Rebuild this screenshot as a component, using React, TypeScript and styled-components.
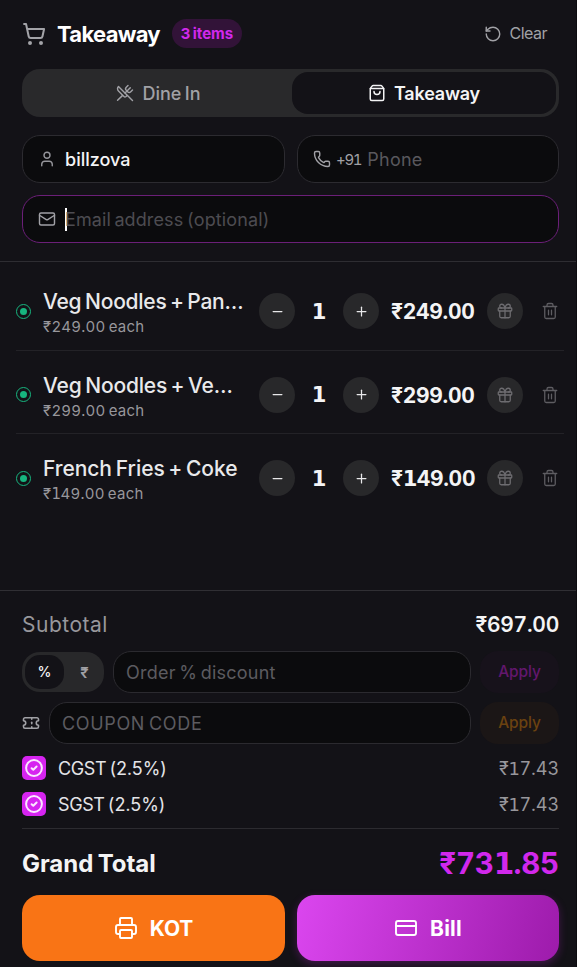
import React from 'react';
import styled, { createGlobalStyle } from 'styled-components';
import {
  ShoppingCart, RotateCcw, UtensilsCrossed, ShoppingBag, User, Phone, Mail, Minus, Plus,
  Gift, Ticket, Printer, CreditCard,
} from 'lucide-react';

const Global = createGlobalStyle`
  *, *::before, *::after { box-sizing: border-box; }
  body { margin: 0; background: #131217; }
`;

const Panel = styled.main`
  width: 577px;
  height: 967px;
  overflow: hidden;
  display: flex;
  flex-direction: column;
  background: #131217;
  border-right: 1px solid #0c0b0f;
  color: #f4f4f5;
  font-family: Inter, 'DejaVu Sans', sans-serif;
  font-variant-numeric: tabular-nums;
`;

const Text = styled.span<{ $size: number; $weight?: number; $color?: string; $ls?: number; $ws?: number }>`
  padding-top: 1px;
  font-size: ${p => p.$size}px;
  font-weight: ${p => p.$weight ?? 400};
  color: ${p => p.$color ?? '#f4f4f5'};
  letter-spacing: ${p => p.$ls ?? 0}px;
  word-spacing: ${p => p.$ws ?? -0.08}em;
  line-height: 1.2;
  white-space: nowrap;
`;

const FootedOne = styled.span`
  font-family: 'DejaVu Sans', sans-serif;
  letter-spacing: -0.03em;
  line-height: 1;
`;

/* Figures with a footed numeral one. */
const Figures = ({ value }: { value: string }) => (
  <>{value.split('').map((c, i) => (c === '1' ? <FootedOne key={i}>1</FootedOne> : c))}</>
);

const Header = styled.header`
  height: 262px;
  flex: none;
  padding: 0 17px 0 22px;
  border-bottom: 1px solid #2e2d32;
`;

const TitleRow = styled.div`
  height: 69px;
  padding: 0 12px 2px 0;
  display: flex;
  align-items: center;
`;

const Title = styled.h1`
  margin: 0 12px 0 11px;
  display: flex;
`;

const Badge = styled.div`
  width: 70px;
  height: 29px;
  border-radius: 15px;
  background: #321338;
  display: flex;
  align-items: center;
  justify-content: center;
`;

const ClearButton = styled.button`
  margin-left: auto;
  padding: 0;
  border: 0;
  background: none;
  font: inherit;
  display: flex;
  align-items: center;
  gap: 7px;
`;

const Tabs = styled.div`
  height: 48px;
  padding: 3px;
  border-radius: 18px;
  background: #29292b;
  display: grid;
  grid-template-columns: 267px 264px;
`;

const Tab = styled.button<{ $active?: boolean }>`
  padding: 0;
  border: 0;
  border-radius: 16px;
  background: ${p => (p.$active ? '#131217' : 'transparent')};
  font: inherit;
  display: flex;
  align-items: center;
  justify-content: center;
  gap: 8px;
`;

const Fields = styled.div`
  margin-top: 18px;
  display: grid;
  grid-template-columns: 263px 262px;
  gap: 12px;
`;

const Field = styled.label<{ $wide?: boolean }>`
  grid-column: ${p => (p.$wide ? '1 / -1' : 'auto')};
  height: 48px;
  padding-left: 15px;
  border: 1px solid ${p => (p.$wide ? '#6b1f78' : '#2c2b30')};
  border-radius: 18px;
  background: #0b0b0d;
  display: flex;
  align-items: center;
`;

const IconSlot = styled.span<{ $gap: number }>`
  display: flex;
  width: 18px;
  justify-content: center;
  margin-right: ${p => p.$gap}px;
`;

const Prefix = styled.span`
  display: flex;
  margin-right: 6px;
`;

const Caret = styled.span`
  width: 2px;
  height: 23px;
  margin-right: -2px;
  background: #fff;
`;

const List = styled.ul`
  flex: 1;
  margin: 0;
  padding: 5px 12px 0 16px;
  list-style: none;
`;

const Item = styled.li`
  height: 83.5px;
  padding-top: 6px;
  display: grid;
  grid-template-columns: 15px 204px 36px 24px 36px 84px 36px 1fr;
  column-gap: 12px;
  align-items: center;
  border-bottom: 1px solid #232227;
  &:last-child { border-bottom-color: transparent; }
`;

const VegMark = styled.span`
  width: 15px;
  height: 15px;
  border: 1.3px solid #17b57f;
  border-radius: 50%;
  display: grid;
  place-items: center;
  &::after {
    content: '';
    width: 7px;
    height: 7px;
    border-radius: 50%;
    background: #17b57f;
  }
`;

const Name = styled.div`
  display: flex;
  flex-direction: column;
  gap: 3px;
  padding-top: 2px;
`;

const RoundButton = styled.button`
  width: 36px;
  height: 36px;
  padding: 0;
  border: 0;
  border-radius: 50%;
  background: #28282a;
  color: #e8e8ea;
  display: grid;
  place-items: center;
`;

const GiftButton = styled(RoundButton)`
  color: #6d6c70;
`;

const Quantity = styled.span`
  justify-self: center;
  padding-top: 1px;
  font: 700 21px 'DejaVu Sans', sans-serif;
`;

const TrashButton = styled.button`
  margin-right: 5px;
  padding: 0;
  border: 0;
  background: none;
  color: #5e5d62;
  display: flex;
  justify-self: end;
`;

const Footer = styled.footer`
  height: 377px;
  flex: none;
  padding: 0 17px 0 22px;
  border-top: 1px solid #302f34;
`;

const Line = styled.div<{ $h: number; $top?: number; $drop?: number }>`
  height: ${p => p.$h}px;
  margin-top: ${p => p.$top ?? 0}px;
  padding-top: ${p => p.$drop ?? 0}px;
  display: flex;
  align-items: center;
  justify-content: space-between;
`;

const EntryRow = styled.div<{ $lead: number }>`
  height: 42px;
  margin-bottom: 9px;
  display: grid;
  grid-template-columns: ${p => p.$lead}px 1fr 79px;
  column-gap: 9px;
  align-items: center;
`;

const Toggle = styled.div`
  height: 40px;
  padding: 3px;
  border-radius: 18px;
  background: #28282a;
  display: grid;
  grid-template-columns: 39px 41px;
`;

const ToggleOption = styled.span<{ $active?: boolean }>`
  border-radius: 15px;
  background: ${p => (p.$active ? '#131217' : 'transparent')};
  display: grid;
  place-items: center;
`;

const Entry = styled.div`
  height: 42px;
  padding-left: 12px;
  border: 1px solid #2b2a2f;
  border-radius: 18px;
  background: #0b0b0d;
  display: flex;
  align-items: center;
`;

const Apply = styled.button<{ $amber?: boolean }>`
  height: 42px;
  padding: 0;
  border: 0;
  border-radius: 18px;
  background: ${p => (p.$amber ? '#1b1616' : '#17121b')};
  font: inherit;
  display: grid;
  place-items: center;
`;

const Tax = styled.div`
  display: flex;
  align-items: center;
  gap: 12px;
`;

const CheckBox = styled.span`
  width: 24px;
  height: 24px;
  border-radius: 5px;
  background: #d624f0;
  color: #fbe6ff;
  display: grid;
  place-items: center;
`;

const Rule = styled.hr`
  height: 1px;
  margin: 12px 0 0;
  border: 0;
  background: #2c2b30;
`;

const Actions = styled.div`
  display: grid;
  grid-template-columns: 263px 262px;
  gap: 12px;
`;

const Action = styled.button<{ $primary?: boolean }>`
  height: 66px;
  padding: 0;
  border: 0;
  border-radius: 18px;
  background: ${p => (p.$primary ? 'linear-gradient(105deg, #db46ef 0%, #9d1bab 100%)' : '#f97415')};
  box-shadow: ${p => (p.$primary ? '0 3px 8px rgba(192, 38, 211, 0.28)' : 'none')};
  color: #fff;
  font: inherit;
  display: flex;
  align-items: center;
  justify-content: center;
  gap: 12px;
`;

const TrashIcon = () => (
  <svg width="18" height="18" viewBox="0 0 24 24" fill="none" stroke="currentColor" strokeWidth="1.7" strokeLinecap="round" strokeLinejoin="round">
    <path d="M3 6h18M5 6v14a2 2 0 0 0 2 2h10a2 2 0 0 0 2-2V6M8 6V4a2 2 0 0 1 2-2h4a2 2 0 0 1 2 2v2M10 11v6M14 11v6" />
  </svg>
);

const CheckIcon = () => (
  <svg width="20" height="20" viewBox="0 0 20 20" fill="none" stroke="currentColor" strokeWidth="2" strokeLinecap="round" strokeLinejoin="round">
    <circle cx="10" cy="10" r="7.9" />
    <path d="M7.6 10.2l1.7 1.6 3.3-3.3" />
  </svg>
);

const items = [
  { name: 'Veg Noodles + Pan…', price: '₹249.00', ls: -0.25 },
  { name: 'Veg Noodles + Ve…', price: '₹299.00', ls: -0.2 },
  { name: 'French Fries + Coke', price: '₹149.00', ls: -0.06 },
];

export default function App() {
  return (
    <Panel>
      <Global />
      <Header>
        <TitleRow>
          <ShoppingCart size={24} strokeWidth={2} color="#a3a3a8" />
          <Title><Text $size={22} $weight={650} $color="#fff" $ls={-0.7}>Takeaway</Text></Title>
          <Badge><Text $size={15} $weight={650} $color="#d128ec" $ls={-0.05} $ws={-0.1}>3 items</Text></Badge>
          <ClearButton>
            <RotateCcw size={18} strokeWidth={1.9} color="#a1a1a6" />
            <Text $size={16} $color="#a1a1a6" $ls={-0.5}>Clear</Text>
          </ClearButton>
        </TitleRow>
        <Tabs>
          <Tab>
            <UtensilsCrossed size={18} strokeWidth={1.9} color="#a1a1a6" />
            <Text $size={18} $weight={500} $color="#a1a1a6" $ls={0}>Dine In</Text>
          </Tab>
          <Tab $active>
            <ShoppingBag size={18} strokeWidth={2} color="#f4f4f5" />
            <Text $size={18} $weight={600} $ls={-0.2}>Takeaway</Text>
          </Tab>
        </Tabs>
        <Fields>
          <Field>
            <IconSlot $gap={9}><User size={18} strokeWidth={1.9} color="#96969b" /></IconSlot>
            <Text $size={18} $weight={500}>billzova</Text>
          </Field>
          <Field>
            <IconSlot $gap={5}><Phone size={18} strokeWidth={1.9} color="#a1a1a6" /></IconSlot>
            <Prefix><Text $size={15} $color="#a1a1a6" $ls={-1.3}>+91</Text></Prefix>
            <Text $size={18} $color="#59585d" $ls={0.25}>Phone</Text>
          </Field>
          <Field $wide>
            <IconSlot $gap={9}><Mail size={18} strokeWidth={1.9} color="#a1a1a6" /></IconSlot>
            <Caret />
            <Text $size={18} $color="#4d4c51" $ls={0.1}>Email address (optional)</Text>
          </Field>
        </Fields>
      </Header>

      <List>
        {items.map(item => (
          <Item key={item.name}>
            <VegMark />
            <Name>
              <Text $size={21} $weight={550} $color="#e9e9eb" $ls={item.ls}>{item.name}</Text>
              <Text $size={15} $color="#98979c" $ls={0.25}><Figures value={`${item.price} each`} /></Text>
            </Name>
            <RoundButton aria-label="Decrease"><Minus size={15} strokeWidth={2} /></RoundButton>
            <Quantity>1</Quantity>
            <RoundButton aria-label="Increase"><Plus size={15} strokeWidth={2} /></RoundButton>
            <Text $size={21} $weight={650} $ls={-0.3}><Figures value={item.price} /></Text>
            <GiftButton aria-label="Complimentary"><Gift size={18} strokeWidth={1.7} /></GiftButton>
            <TrashButton aria-label="Remove"><TrashIcon /></TrashButton>
          </Item>
        ))}
      </List>

      <Footer>
        <Line $h={60} $drop={7}>
          <Text $size={21} $color="#98979c" $ls={0.5}>Subtotal</Text>
          <Text $size={21} $weight={600} $ls={-0.25}>₹697.00</Text>
        </Line>
        <EntryRow $lead={82}>
          <Toggle>
            <ToggleOption $active><Text $size={14} $weight={500}>%</Text></ToggleOption>
            <ToggleOption><Text $size={15} $weight={600} $color="#a1a1a6">₹</Text></ToggleOption>
          </Toggle>
          <Entry><Text $size={18} $color="#5c5b60" $ls={0.22}>Order % discount</Text></Entry>
          <Apply><Text $size={15.5} $weight={500} $color="#63176e" $ls={-0.1}>Apply</Text></Apply>
        </EntryRow>
        <EntryRow $lead={18}>
          <Ticket size={18} strokeWidth={2.1} color="#a1a1a6" />
          <Entry><Text $size={18} $color="#5c5b60" $ls={0.65}>COUPON CODE</Text></Entry>
          <Apply $amber><Text $size={15.5} $weight={500} $color="#6b4210" $ls={-0.1}>Apply</Text></Apply>
        </EntryRow>
        {['CGST (2.5%)', 'SGST (2.5%)'].map((tax, i) => (
          <Line $h={24} $top={i ? 12 : 12} key={tax}>
            <Tax>
              <CheckBox><CheckIcon /></CheckBox>
              <Text $size={18} $color="#e4e4e7" $ls={-0.4}>{tax}</Text>
            </Tax>
            <Text $size={18} $color="#98979c" $ls={-0.1}><Figures value="₹17.43" /></Text>
          </Line>
        ))}
        <Rule />
        <Line $h={66} $drop={3}>
          <Text $size={24} $weight={650} $ls={-0.05}>Grand Total</Text>
          <Text $size={29.5} $weight={650} $color="#d128ec" $ls={-0.15}><Figures value="₹731.85" /></Text>
        </Line>
        <Actions>
          <Action><Printer size={24} strokeWidth={1.9} /><Text $size={21} $weight={700} $color="#fff" $ls={-0.14}>KOT</Text></Action>
          <Action $primary><CreditCard size={24} strokeWidth={1.9} /><Text $size={21} $weight={700} $color="#fff" $ls={0.24}>Bill</Text></Action>
        </Actions>
      </Footer>
    </Panel>
  );
}
